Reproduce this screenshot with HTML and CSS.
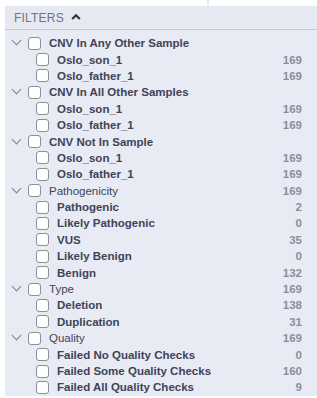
FILE: index.html
```html
<!DOCTYPE html>
<html lang="en">
<head>
    <meta charset="UTF-8">
    <title>Filters</title>
    <link rel="stylesheet" href="styles.css">
</head>
<body>
    <div class="topbar"><span class="divider"></span></div>
    <div class="panel">
        <div class="panel-head">
            <span>FILTERS</span>
            <svg class="caret" width="10" height="7" viewBox="0 0 10 7"><path d="M1.2 6 L5 2.2 L8.8 6" fill="none" stroke="#2f3545" stroke-width="2.2"/></svg>
        </div>
        <ul class="tree">
            <li class="row group bold"><span class="chev"></span><span class="box"></span><span class="label">CNV In Any Other Sample</span></li>
            <li class="row child"><span class="box"></span><span class="label">Oslo_son_1</span><span class="count">169</span></li>
            <li class="row child"><span class="box"></span><span class="label">Oslo_father_1</span><span class="count">169</span></li>

            <li class="row group bold"><span class="chev"></span><span class="box"></span><span class="label">CNV In All Other Samples</span></li>
            <li class="row child"><span class="box"></span><span class="label">Oslo_son_1</span><span class="count">169</span></li>
            <li class="row child"><span class="box"></span><span class="label">Oslo_father_1</span><span class="count">169</span></li>

            <li class="row group bold"><span class="chev"></span><span class="box"></span><span class="label">CNV Not In Sample</span></li>
            <li class="row child"><span class="box"></span><span class="label">Oslo_son_1</span><span class="count">169</span></li>
            <li class="row child"><span class="box"></span><span class="label">Oslo_father_1</span><span class="count">169</span></li>

            <li class="row group"><span class="chev"></span><span class="box"></span><span class="label">Pathogenicity</span><span class="count">169</span></li>
            <li class="row child"><span class="box"></span><span class="label">Pathogenic</span><span class="count">2</span></li>
            <li class="row child"><span class="box"></span><span class="label">Likely Pathogenic</span><span class="count">0</span></li>
            <li class="row child"><span class="box"></span><span class="label">VUS</span><span class="count">35</span></li>
            <li class="row child"><span class="box"></span><span class="label">Likely Benign</span><span class="count">0</span></li>
            <li class="row child"><span class="box"></span><span class="label">Benign</span><span class="count">132</span></li>

            <li class="row group"><span class="chev"></span><span class="box"></span><span class="label">Type</span><span class="count">169</span></li>
            <li class="row child"><span class="box"></span><span class="label">Deletion</span><span class="count">138</span></li>
            <li class="row child"><span class="box"></span><span class="label">Duplication</span><span class="count">31</span></li>

            <li class="row group"><span class="chev"></span><span class="box"></span><span class="label">Quality</span><span class="count">169</span></li>
            <li class="row child"><span class="box"></span><span class="label">Failed No Quality Checks</span><span class="count">0</span></li>
            <li class="row child"><span class="box"></span><span class="label">Failed Some Quality Checks</span><span class="count">160</span></li>
            <li class="row child"><span class="box"></span><span class="label">Failed All Quality Checks</span><span class="count">9</span></li>
        </ul>
    </div>
</body>
</html>
```

FILE: styles.css
```css
body {
    margin: 0;
    background-color: #fff;
    font-family: 'Liberation Sans', Arial, sans-serif;
    color: #3d4457;
}
.topbar {
    height: 6px;
    position: relative;
}
.divider {
    position: absolute;
    left: 207px;
    top: 0;
    width: 2px;
    height: 6px;
    background-color: #eceef2;
}
.panel {
    margin-left: 5px;
    height: 390px;
    background-color: #e8ebf3;
}
.panel-head {
    height: 23px;
    display: flex;
    align-items: center;
    gap: 7px;
    padding-left: 9px;
    font-size: 12px;
    letter-spacing: 0.2px;
    color: #6d7384;
    border-bottom: 1px solid #c6cbd8;
    background-color: #e6e9f1;
}
.caret {
    margin-top: -3px;
}
.tree {
    list-style: none;
    margin: 0;
    padding: 5px 0 0 0;
}
.row {
    height: 16.4px;
    display: flex;
    align-items: center;
    font-size: 11.5px;
    font-weight: bold;
    padding-right: 15px;
}
.row.group {
    padding-left: 5px;
    font-weight: normal;
}
.row.group.bold {
    font-weight: bold;
}
.row.child {
    padding-left: 31px;
}
.chev {
    width: 7px;
    height: 7px;
    border-right: 1.4px solid #7c8293;
    border-bottom: 1.4px solid #7c8293;
    transform: rotate(45deg);
    margin: -5px 8px 0 3px;
    box-sizing: border-box;
}
.box {
    width: 13px;
    height: 13px;
    border: 1px solid #8c8f97;
    border-radius: 3px;
    background-color: #fff;
    box-sizing: border-box;
    flex-shrink: 0;
}
.label {
    margin-left: 8px;
    flex: 1;
    white-space: nowrap;
}
.count {
    color: #8a8f9d;
    font-size: 11.5px;
    font-weight: bold;
}
```
